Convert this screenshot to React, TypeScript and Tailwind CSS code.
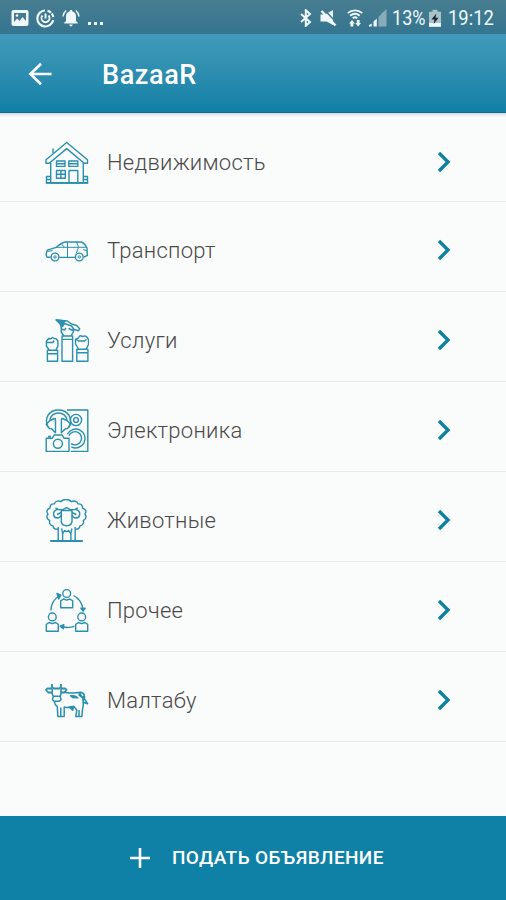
import type { ReactNode } from 'react';

type Category = {
  id: string;
  title: string;
  icon: ReactNode;
};

const categories: Category[] = [
  {
    id: 'realty',
    title: 'Недвижимость',
    icon: (
      <>
        <path d="M21.7 1.5 1 18.8v3.4h3.2L21.7 7.6l17.5 14.6h3.3v-3.4z" />
        <path d="M5.7 22v19.7h32.6V22M8 12V7.5" />
        <path d="M11.5 20h8.5v5.4h-8.5zM23.8 20h9v5.4h-9zM11.5 22.7H20M23.8 22.7h9" />
        <path d="M11.5 29.5h8.8v7.7h-8.8zM15.9 29.5v7.7M11.5 33.3h8.8M24 41.5v-12h8.8v12" />
        <path d="M5.7 35.5H1.5v6.2h41v-6.2h-4.2M1.5 38.5h4.2M38.3 38.5h4.2" />
        <path d="M.8 42h42.5" strokeWidth="1.7" />
      </>
    ),
  },
  {
    id: 'transport',
    title: 'Транспорт',
    icon: (
      <>
        <path d="M5.7 28.2H2.2L1 25.8l1.2-4.7 9-2.8c3-2.6 5.6-4.9 9-5.3h16c2.7.8 4.4 3.2 5.8 6l.4 7.4-3.2 1.6M14.4 28.4h15.8" />
        <circle cx="10" cy="28" r="3.9" />
        <circle cx="34.3" cy="28" r="3.9" />
        <circle cx="10" cy="28" r="1.2" strokeWidth="1" />
        <circle cx="34.3" cy="28" r="1.2" strokeWidth="1" />
        <path d="M11.2 18.3h30M22.5 13v15.4M31.7 13l1.8 5.3-2.3 6M16.5 15l3 3.3M2.4 22.5l5-.9M42 21.6l-4-1" strokeWidth="1" />
      </>
    ),
  },
  {
    id: 'services',
    title: 'Услуги',
    icon: (
      <>
        <path d="M17 17h10.6v25.3H17zM17 20.4h10.6" />
        <path d="M2.4 31.2h10.2v11.1H2.4zM2.4 34.7h10.2M31.8 30.2h11.1v12.1H31.8zM31.8 33.7h11.1" />
        <path d="m4.2 31-2.8-4v-4.7l2.2-2.8 2 .3L7.500 18.500l2 1.100 1.800.2 1.600 2.200v5.200L10.800 31M1.800 23.500h6l1.400-2" />
        <path d="m33.600 30-3.100-5v-4.700l2.600-1.200 2-2.400 2.800.8 2.200-.6 2.200 1.500 1.200 2.200v4.900L41.200 30M31 20.500l2.500 1.500h6l2-1.500" />
        <path d="m19 17-2.800-4V8.600l1.800-1.800M28.500 9.500v3.100L26 17M16.500 10l3 1 1.500-2M28 11.500l-4.500-2" />
        <path d="M11.200.9 15 4.500l1 3 2-1 1.500-2 7 2.500 2.500 3.500 4.500 1.200 1.200-1.900-3-3.300-4.500-1.200-5-3.300z" />
        <path d="M11.200.9 20 2l-1.500 2.500-2 1.500z" fill="currentColor" />
      </>
    ),
  },
  {
    id: 'electronics',
    title: 'Электроника',
    icon: (
      <>
        <path d="M22 1h20.800v41.400H25.800" />
        <path d="M3.300 18.500C-1.800 8.500 4.700 1 13.400 1s15.400 7.500 10.400 17.500M4.800 11.500c.8-10 16.400-10 17.300 0" />
        <path d="m9.500 9.500-4.500 2-3.800 3.800 3.300 4.300 2 .2 4 4V10zM17.500 9.500l4.500 2 3.700 3.800-3.300 4.300-2 .2-4 4V10z" />
        <circle cx="31" cy="11" r="5.600" />
        <circle cx="31" cy="11" r="2.400" />
        <path d="M22.300 25.300a9.400 9.400 0 1 1 4 12.500M23.900 26.700a6.600 6.600 0 1 1 2.200 7.900" />
        <path d="M1.200 29.200h6.200L9.200 26h8l1.800 3.200h5v13.200H1.200zM3 27.500h3" />
        <circle cx="12.900" cy="34.800" r="4.500" />
      </>
    ),
  },
  {
    id: 'animals',
    title: 'Животные',
    icon: (
      <>
        <path d="M13.200 30c-3 .6-5-.7-5.200-3.100-3-.6-4-2.700-3.200-5.300-3-1.600-3.800-4-1.800-6.400-2-2.800-1-5.300 1.800-6C5 6.200 6.500 4.600 9.300 4.900 10.500 2.100 13.300 1.200 16 2.700c2-3 8-3 10.500 0 2.700-1.500 5.700-.5 6.500 2.200 3-.3 4.500 1.300 4.600 4.300 3.300.7 4.300 3.300 2.300 6 2 2.400 1.400 4.800-1.600 6.400.8 2.600-.5 4.700-3.300 5.300-.4 2.500-2.200 3.700-4.900 3.100" />
        <path d="M16.300 11.500v11.200c.6 5.300 10 5.300 10.700 0V11.500z" />
        <path d="M16.300 16c-1.500 4-6.800 4-7.700 0-.3-2.500 1.300-5 4.200-5.700M27 16c1.500 4 6.800 4 7.700 0 .3-2.500-1.300-5-4.200-5.700M12 15.500l4.300-2M31.300 15.500l-4.300-2" />
        <path d="m10.500 8.800 2.800 1.800h4.500l3.800-2 3.800 2h4.500l2.900-1.800" />
        <path d="M13.200 28v14M17.600 42v-8l-1-4.500M25.900 42v-8l1-4.500M30.200 28v14M17.600 35l2-3.500c1.200 1.300 2.900 1.300 4.100 0l2.200 3.500" />
        <path d="M5.200 42h32.600" strokeWidth="2" />
      </>
    ),
  },
  {
    id: 'other',
    title: 'Прочее',
    icon: (
      <>
        <circle cx="21.700" cy="4.500" r="3.900" />
        <circle cx="7.300" cy="27.900" r="3.900" />
        <circle cx="36.700" cy="27.900" r="3.900" />
        <path d="m18.500 10-2.800 1.800v7h12v-7L24.900 10l-3.200 1.200z" />
        <path d="m4.100 33.500-2.800 1.800v7h12v-7l-2.800-1.800-3.200 1.200z" />
        <path d="m33.500 33.500-2.800 1.800v7h12v-7l-2.800-1.800-3.200 1.200z" />
        <path d="M5.800 21.500C6.300 15 9 10 14 7M28.500 6.500c5.700 3 8.700 8 9.300 13.500M29.500 37.400c-4 1.400-8.500 1.300-12.500.4" />
        <path d="m12 4.500 3.800 1.700-2.100 3.800zM35.800 19.200l2.200 3 2.200-3zM18.800 35.700l-3.600 1.400 3.200 2.600z" fill="currentColor" />
      </>
    ),
  },
  {
    id: 'maltabu',
    title: 'Малтабу',
    icon: (
      <>
        <path d="M7 5v3.300l1.800 1.200h5.400L16 8.300V5M7 9.500H2.200L1 11l2.200 2.500h4M15.800 9.500h4.500l1.200 1.300-2 2.700h-4" strokeWidth="1.800" />
        <path d="M7.200 10v5l1 2.300-.7 3.400 1.700 1.500h5l1.800-1.600-.8-3.300.8-2.400V10M8.200 17.300h7" strokeWidth="1.500" />
        <path d="M19 13c4.500 2 10.700.5 17 .4 3.300.6 3.800 3.200 3.500 6.500l3 4.800-4.200-1.500-.2-6" strokeWidth="1.600" />
        <path d="M9.300 22.200c.2 3 1.400 4.400 3 5.500l.5 9.800h6.400V28c4 1 7 .8 9.400-.7l3.200 3.800-1 6.400h6.100l.6-7.200c1.400-4.800 1-9 .5-13.200M15.800 28.500v9M34 31v6.500" strokeWidth="1.500" />
        <path d="m25.500 16.700 4.500.3 3 1.800-5.500-.2zM35 14.200l2.500 4.800-3.500-3zM24 28l3.800 3.200.7-3.800z" fill="currentColor" />
      </>
    ),
  },
];

const StatusBar = () => (
  <div className="flex h-[34px] items-center justify-between bg-linear-to-b from-[#477d90] to-[#347590] pl-[11px] pr-[11px] pt-[2px] text-[#eff8fb]">
    <div className="flex items-center gap-[7px]">
      <svg className="h-[18px] w-[18px]" viewBox="0 0 18 18" fill="none">
        <rect x=".5" y="1" width="17" height="16" rx="2" fill="currentColor" />
        <path d="M3 4h12v8l-3.500-4-3 4-2.300-2.600L3 13z" fill="#427c91" />
        <circle cx="6" cy="6.500" r="1.300" fill="currentColor" />
      </svg>
      <svg className="h-[19px] w-[19px]" viewBox="0 0 19 19" fill="none" stroke="currentColor">
        <path d="M9 1.500A8 8 0 1 0 17.200 11" strokeWidth="2.200" />
        <path d="M11.500 1.800A8 8 0 0 1 17.400 8.500" strokeWidth="2.200" strokeDasharray="4 1" />
        <path d="M6.500 6.500a4 4 0 1 0 6 0M9.500 4.500v5" strokeWidth="2" />
      </svg>
      <svg className="h-[18px] w-[18px]" viewBox="0 0 18 18" fill="none">
        <path d="M9 1c1 0 1.400.6 1.400 1.400C13 3 14 5 14 7.500V12l1.700 1.600v1H2.300v-1L4 12V7.500C4 5 5 3 7.600 2.400 7.600 1.600 8 1 9 1zM7.300 15.500h3.400C10.400 18 7.600 18 7.300 15.500z" fill="currentColor" />
        <path d="M4.200 1.500C2.200 3 1.200 5 1 7.500M13.800 1.500C15.800 3 16.800 5 17 7.500" stroke="currentColor" strokeWidth="1.500" />
      </svg>
      <div className="flex gap-[3px] pl-px pt-[11px]">
        <span className="h-[3px] w-[3px] bg-current" />
        <span className="h-[3px] w-[3px] bg-current" />
        <span className="h-[3px] w-[3px] bg-current" />
      </div>
    </div>

    <div className="flex items-center">
      <svg className="h-[18px] w-3" viewBox="0 0 12 18" fill="none" stroke="currentColor" strokeWidth="2">
        <path d="m1 5 9 8-4.200 3.800V1.200L10 5l-9 8" />
      </svg>
      <svg className="ml-[8px] h-[18px] w-[17px]" viewBox="0 0 17 18" fill="none">
        <path d="M.5 5.500H5L13 1v15L6.500 12.500h-6z" fill="currentColor" />
        <path d="m4 .5 12.500 13" stroke="#3d7a91" strokeWidth="1.500" />
        <path d="m1.500 2 14 14.500" stroke="currentColor" strokeWidth="2.500" />
      </svg>
      <svg className="ml-[10px] h-[18px] w-4" viewBox="0 0 16 18" fill="none" stroke="currentColor" strokeWidth="1.800">
        <path d="M.7 4.200C5 .4 11 .4 15.300 4.200M3.200 6.800c3-2.500 6.600-2.500 9.600 0M5.700 9.200c1.500-1.200 3.100-1.200 4.600 0" />
        <path d="M3.500 17.500v-3H2l3-3.500 3 3.500H6.300v3zM9.800 11h2.800v3H14l-2.900 3.500L8.300 14h1.500z" fill="currentColor" stroke="none" />
      </svg>
      <svg className="ml-[6px] h-[18px] w-[18px]" viewBox="0 0 18 18" fill="none">
        <path d="M0 17.500h2.700v-3L0 16zM4.500 17.500h3.300v-8l-3.300 3z" fill="currentColor" />
        <path d="M9.500 17.500V7.800L12 5.500v12zM12 17.500V5L17.500 0v17.500z" fill="#86adbb" />
      </svg>
      <span className="ml-[5px] w-[37px] origin-left scale-x-[0.88] whitespace-nowrap text-[20.5px] leading-5">13%</span>
      <svg className="h-[18px] w-3" viewBox="0 0 12 18">
        <path d="M3.500.7h5v2H12v15H0v-15h3.500z" fill="#a9c3cb" />
        <path d="M0 14h12v3.700H0z" fill="#eff8fb" />
        <path d="M7.300 4.500 2.500 10.600h3L4.700 15l4.800-6.300h-3z" fill="#14252c" />
      </svg>
      <span className="ml-[7px] w-[47px] origin-left scale-x-[0.9] whitespace-nowrap text-[20.5px] leading-5">19:12</span>
    </div>
  </div>
);

const Header = () => (
  <header className="flex h-[79px] items-center border-b border-[#0b6f95] bg-linear-to-b from-[#419bba] to-[#0f80a6] pt-px text-white">
    <button type="button" aria-label="Назад" className="ml-[28px]">
      <svg className="h-6 w-6" viewBox="0 0 24 24" fill="none" stroke="currentColor" strokeWidth="2.6">
        <path d="M23.500 12H3M13 1.700 2.400 12 13 22.300" />
      </svg>
    </button>
    <h1 className="ml-[50px] pt-[3px] text-[27px] font-medium leading-8 tracking-[0.6px]">BazaaR</h1>
  </header>
);

const CategoryRow = ({ title, icon }: Omit<Category, 'id'>) => (
  <li className="flex h-[90px] items-center border-b border-[#e9eaeb] pl-[45px] pr-[55px] pt-[6px] first:h-[85px] first:pt-[5px]">
    <svg
      className="mt-[2px] h-11 w-11 shrink-0 text-[#2a90ad]"
      viewBox="0 0 44 44"
      fill="none"
      stroke="currentColor"
      strokeWidth="1.4"
      strokeLinejoin="round"
    >
      {icon}
    </svg>
    <span className="ml-[18px] mt-[2px] flex-1 whitespace-nowrap text-[22px] font-light leading-8 tracking-[0.28px] text-[#4a4a4a]">
      {title}
    </span>
    <svg className="h-[22px] w-[14px] text-[#10809f]" viewBox="0 0 14 22" fill="none" stroke="currentColor" strokeWidth="3.4">
      <path d="m2 2 9 9-9 9" />
    </svg>
  </li>
);

export default function App() {
  return (
    <div className="flex h-[900px] w-[506px] flex-col overflow-hidden bg-[#fafbfb] font-['Roboto',sans-serif]">
      <StatusBar />
      <Header />
      <main className="flex-1">
        <div className="h-1 bg-linear-to-b from-[#d3d8de] to-[#fafbfb]" />
        <ul>
          {categories.map((category) => (
            <CategoryRow key={category.id} title={category.title} icon={category.icon} />
          ))}
        </ul>
      </main>
      <button type="button" className="flex h-[84px] items-center bg-[#0f80a6] pl-[129px] text-white">
        <svg className="h-[22px] w-[22px]" viewBox="0 0 22 22" stroke="currentColor" strokeWidth="2.6">
          <path d="M11 1v20M1 11h20" />
        </svg>
        <span className="ml-[21px] whitespace-nowrap pt-px text-[19px] font-medium tracking-[0.37px]">ПОДАТЬ ОБЪЯВЛЕНИЕ</span>
      </button>
    </div>
  );
}
